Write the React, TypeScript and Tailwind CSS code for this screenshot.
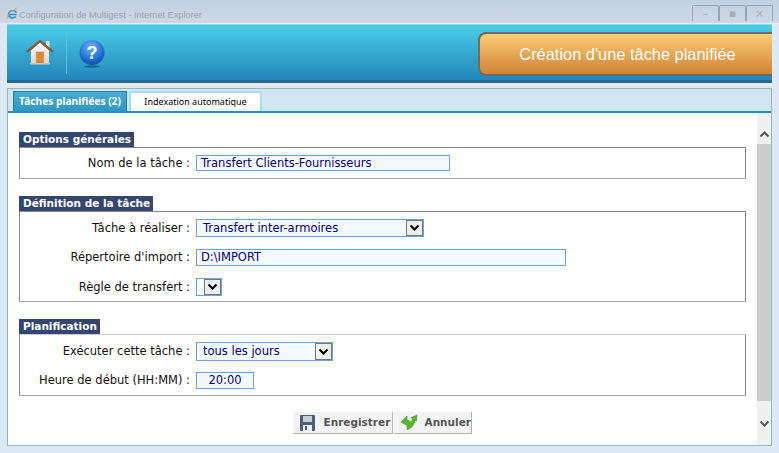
import React from "react";

const font = "font-['DejaVu_Sans',sans-serif]";

const Chevron = ({ className = "w-[11px] h-[8px]" }: { className?: string }) => (
  <svg viewBox="0 0 11 8" className={className} fill="none">
    <path d="M1.5 1.5 5.5 5.5 9.5 1.5" stroke="currentColor" strokeWidth="2" />
  </svg>
);

const HomeIcon = () => (
  <svg width="28" height="26" viewBox="0 0 28 26">
    <defs>
      <linearGradient id="wall" x1="0" y1="0" x2="0" y2="1">
        <stop offset="0" stopColor="#ffffff" />
        <stop offset="1" stopColor="#d9d9d0" />
      </linearGradient>
    </defs>
    <rect x="20" y="2" width="3.5" height="8" fill="#e8e4dc" />
    <path d="M5 11 14 3 23 11V24H5Z" fill="url(#wall)" />
    <path d="M1 13 14 2 27 13" fill="none" stroke="#8a5a3c" strokeWidth="2.4" />
    <rect x="10.5" y="13" width="7" height="11" fill="#e08a35" stroke="#c9752a" strokeWidth="0.5" />
    <rect x="4" y="24" width="20" height="1.5" fill="#c9c9c0" />
  </svg>
);

const HelpIcon = () => (
  <svg width="26" height="28" viewBox="0 0 26 28">
    <defs>
      <radialGradient id="ball" cx="0.45" cy="0.3" r="0.8">
        <stop offset="0" stopColor="#6fb6f4" />
        <stop offset="0.6" stopColor="#1f6fd4" />
        <stop offset="1" stopColor="#0c3f9c" />
      </radialGradient>
    </defs>
    <ellipse cx="13" cy="26.5" rx="8" ry="1.2" fill="#14506f" opacity="0.7" />
    <circle cx="13" cy="12.5" r="12.5" fill="url(#ball)" />
    <text
      x="13"
      y="18.5"
      textAnchor="middle"
      fontSize="18"
      fontWeight="700"
      fill="#ffffff"
      fontFamily="Liberation Sans"
    >
      ?
    </text>
  </svg>
);

const IeIcon = () => (
  <svg width="13" height="13" viewBox="0 0 13 13" fill="none">
    <path d="M10.6 7.5H2.6M10.4 5.5C9.6 3.4 4 2.6 2.7 6.6 1.9 10 6.4 12.4 10 9.6" stroke="#2f8fe0" strokeWidth="1.7" />
    <path d="M1 12C0.6 8 7 1.5 12 1" stroke="#e0b23a" strokeWidth="1" />
  </svg>
);

const FloppyIcon = () => (
  <svg width="15" height="16" viewBox="0 0 15 16">
    <rect x="0" y="0" width="15" height="16" rx="1" fill="#4d5f78" />
    <rect x="3" y="1" width="9" height="6" fill="#c9ced6" />
    <rect x="3" y="10" width="9" height="6" fill="#eef0f2" />
    <rect x="5" y="11" width="2" height="4" fill="#4d5f78" />
  </svg>
);

const BackIcon = () => (
  <svg width="18" height="18" viewBox="0 0 18 18">
    <path d="M1 8 7 2V5.5L11 8 12.5 5 11 3.5 17 1 16.5 7 15 6C14.5 11 11 15 7 15.5V11.5Z" fill="#5cb531" stroke="#3d8f20" strokeWidth="0.5" />
  </svg>
);

const Section = ({
  title,
  boxClass,
  children,
}: {
  title: string;
  boxClass: string;
  children: React.ReactNode;
}) => (
  <section>
    <div className="flex">
      <div className={`bg-[#34466f] text-white font-bold text-[10.5px] leading-[15px] h-[15px] pl-[4px] pr-[3px] ${font}`}>
        {title}
      </div>
    </div>
    <div className={`border border-[#888888] border-b-[#aaaaaa] flex flex-col ${boxClass}`}>{children}</div>
  </section>
);

const Row = ({
  label,
  children,
}: {
  label: string;
  children: React.ReactNode;
}) => (
  <div className="flex items-center gap-[6px]">
    <div className="w-[170px] pt-[1px] text-right text-[11.5px] text-[#111111] whitespace-nowrap">{label}</div>
    {children}
  </div>
);

const Field = ({ value, className }: { value: string; className: string }) => (
  <div className={`border border-[#6ea0e8] bg-[#f5faff] text-[#000080] text-[11.5px] flex items-center pl-[4px] pt-[1px] ${className}`}>
    {value}
  </div>
);

const Select = ({ value, className }: { value: string; className: string }) => (
  <div className={`border border-[#6ea0e8] bg-[#f5faff] text-[#000080] text-[11.5px] flex items-center justify-between pl-[6px] ${className}`}>
    <span className="pt-[1px]">{value}</span>
    <div className="w-[17px] h-full bg-[#eeeeee] border border-[#777777] flex items-center justify-center text-black">
      <Chevron />
    </div>
  </div>
);

const ActionButton = ({
  icon,
  label,
  className,
}: {
  icon: React.ReactNode;
  label: string;
  className: string;
}) => (
  <div className={`h-[22px] flex items-center bg-[#f3f3f3] border-b border-r border-[#b5b5b5] text-[#555555] font-bold text-[10.5px] whitespace-nowrap ${className}`}>
    {icon}
    <span>{label}</span>
  </div>
);

export default function App() {
  return (
    <div className={`w-[779px] h-[453px] overflow-hidden flex flex-col bg-[#dce8f4] ${font}`}>
      {/* title bar */}
      <div className="h-[24px] shrink-0 flex bg-gradient-to-b from-[#c3d0e0] to-[#ccd8e6] pl-[6px] pr-[6px] border-b border-[#e6edf5]">
        <div className="flex items-center flex-1 pt-[3px]">
          <IeIcon />
          <span className="mt-[6px] text-[9.2px] text-[#9aa3ae] font-['Liberation_Sans',sans-serif]">
            Configuration de Multigest - Internet Explorer
          </span>
        </div>
        <div className="flex self-start mt-[5px] text-[#a4adb8]">
          {["–", "▪", "×"].map((glyph) => (
            <div
              key={glyph}
              className="w-[27px] h-[16px] border border-b-0 border-[#98a5b5] rounded-t-[2px] flex items-center justify-center text-[11px] leading-none"
            >
              {glyph}
            </div>
          ))}
        </div>
      </div>

      {/* header */}
      <header className="mx-[7px] h-[59px] shrink-0 flex items-center bg-gradient-to-b from-[#4ccde6] to-[#2286bc] border-t border-t-[#7fdcec] border-b-[3px] border-b-[#1f6a94]">
        <div className="ml-[19px] w-[28px] flex mb-[1px]">
          <HomeIcon />
        </div>
        <div className="ml-[12px] w-px h-[42px] bg-[#6cb9d6]" />
        <div className="ml-[12px] flex mt-[2px]">
          <HelpIcon />
        </div>
        <div className="ml-auto w-[294px] h-[44px] mt-[3px] pl-[3px] flex items-center justify-center bg-gradient-to-b from-[#fdcc74] to-[#cf8433] border-2 border-r-0 border-[#6f6a63] rounded-l-[8px] text-white text-[16.4px] font-['Liberation_Sans',sans-serif]">
          Création d'une tâche planifiée
        </div>
      </header>

      <div className="h-[5px] mx-[7px] shrink-0 bg-[#e8e8e8]" />

      {/* tabs panel */}
      <main className="mx-[7px] mb-[7px] flex-1 min-h-0 flex flex-col border border-[#8fb8c0] bg-white">
        <div className="h-[24px] shrink-0 flex items-end pl-[5px] gap-[2px] bg-[#cfe7f1] border-b-[2px] border-b-[#2a8fc0]">
          <div className="w-[114px] h-[20px] flex items-center justify-center bg-gradient-to-b from-[#48acd2] to-[#2f97c6] border-x border-t border-[#2a7fa8] text-white font-bold text-[10.2px] whitespace-nowrap font-['Noto_Sans',sans-serif]">
            Tâches planifiées (2)
          </div>
          <div className="w-[133px] h-[20px] flex items-center justify-center bg-white border-x-2 border-t-2 border-[#a9dbee] text-black text-[9px] whitespace-nowrap font-['Noto_Sans',sans-serif]">
            Indexation automatique
          </div>
        </div>

        <div className="flex flex-1 min-h-0">
          <div className="flex-1 pt-[19px] px-[11px] flex flex-col">
            <Section title="Options générales" boxClass="h-[32px] justify-center">
              <Row label="Nom de la tâche :">
                <Field value="Transfert Clients-Fournisseurs" className="w-[254px] h-[16px]" />
              </Row>
            </Section>
            <div className="h-[17px]" />
            <Section title="Définition de la tâche" boxClass="h-[91px] pt-[7px] gap-[11px]">
              <Row label="Tâche à réaliser :">
                <Select value="Transfert inter-armoires" className="w-[228px] h-[18px]" />
              </Row>
              <Row label="Répertoire d'import :">
                <Field value="D:\IMPORT" className="w-[370px] h-[17px]" />
              </Row>
              <Row label="Règle de transfert :">
                <Select value="" className="w-[26px] h-[18px]" />
              </Row>
            </Section>
            <div className="h-[17px]" />
            <Section title="Planification" boxClass="h-[62px] pt-[7px] gap-[10px] border-t-[#cccccc]">
              <Row label="Exécuter cette tâche :">
                <Select value="tous les jours" className="w-[137px] h-[19px]" />
              </Row>
              <Row label="Heure de début (HH:MM) :">
                <Field value="20:00" className="w-[58px] h-[17px] justify-center !pl-0" />
              </Row>
            </Section>
            <div className="mt-[16px] flex justify-center gap-px pr-[1px]">
              <ActionButton
                icon={<span className="ml-[7px] mr-[9px] flex"><FloppyIcon /></span>}
                label="Enregistrer"
                className="w-[100px]"
              />
              <ActionButton
                icon={<span className="ml-[6px] mr-[7px] flex"><BackIcon /></span>}
                label="Annuler"
                className="w-[78px]"
              />
            </div>
          </div>

          {/* scrollbar */}
          <div className="w-[14px] shrink-0 bg-[#f0f0f0] flex flex-col text-[#555555]">
            <div className="h-[31px] flex items-end justify-center pb-[6px]">
              <Chevron className="w-[11px] h-[8px] rotate-180" />
            </div>
            <div className="h-[257px] bg-[#cdcdcd]" />
            <div className="flex-1 flex items-center justify-center pt-[2px]">
              <Chevron />
            </div>
          </div>
        </div>
      </main>
    </div>
  );
}
